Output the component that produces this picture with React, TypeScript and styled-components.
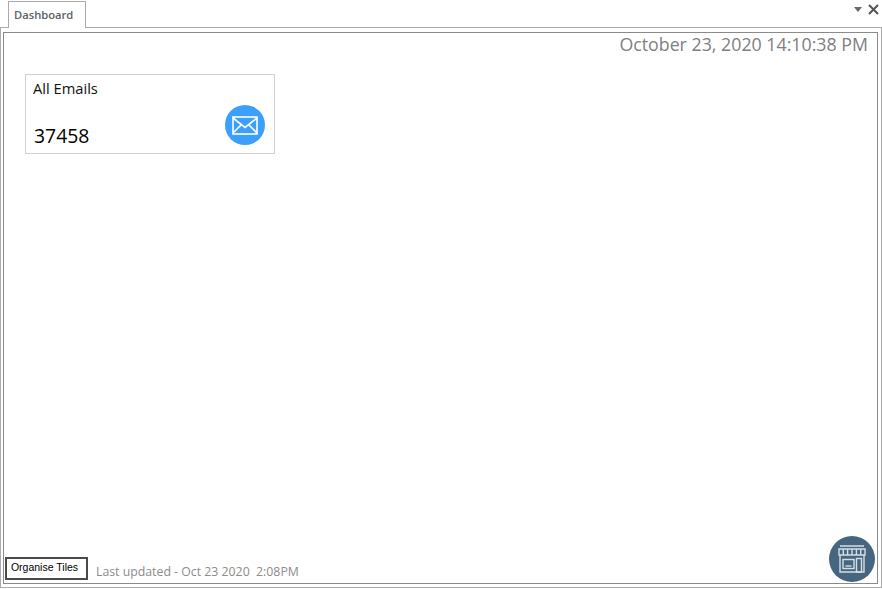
import React from "react";
import styled, { createGlobalStyle } from "styled-components";

const Global = createGlobalStyle`
  html, body {
    margin: 0;
    padding: 0;
    background: #fff;
  }
  body {
    font-family: "Open Sans", "Noto Sans", sans-serif;
  }
`;

const Window = styled.div`
  width: 882px;
  height: 589px;
  display: flex;
  flex-direction: column;
  overflow: hidden;
  background: #fff;
`;

const TabStrip = styled.div`
  height: 27px;
  flex-shrink: 0;
  display: flex;
  align-items: flex-end;
  justify-content: space-between;
  padding: 0 3px 0 8px;
`;

const Tab = styled.div`
  width: 78px;
  height: 27px;
  margin-bottom: -1px;
  position: relative;
  z-index: 1;
  display: flex;
  align-items: center;
  box-sizing: border-box;
  border: 1px solid #ababab;
  border-bottom: none;
  background: #fff;
  padding: 0 0 2px 5px;
  color: #5a5f66;
  font-family: "Open Sans", sans-serif;
  font-size: 11.2px;
  font-weight: 600;
`;

const TabControls = styled.div`
  align-self: flex-start;
  display: flex;
  align-items: center;
  gap: 6px;
  padding-top: 4px;
`;

const Frame = styled.div`
  flex: 1;
  box-sizing: border-box;
  border: 1px solid #ababab;
  margin-bottom: 1px;
  padding: 4px 3px 3px 2px;
  display: flex;
`;

const Content = styled.div`
  flex: 1;
  box-sizing: border-box;
  border: 1px solid #8a8a8a;
  display: flex;
  flex-direction: column;
  padding: 0 2px 1px 1px;
`;

const Clock = styled.div`
  text-align: right;
  padding-right: 7px;
  margin-bottom: 2px;
  color: #808080;
  font-family: "Open Sans", sans-serif;
  font-size: 17.8px;
  line-height: 22px;
`;

const Tile = styled.div`
  width: 250px;
  height: 80px;
  margin: 17px 0 0 20px;
  box-sizing: border-box;
  border: 1px solid #d2d2d2;
  padding: 4px 9px 0 7px;
  display: flex;
  flex-direction: column;
`;

const TileTitle = styled.div`
  color: #111;
  font-size: 14.7px;
  line-height: 19px;
`;

const TileRow = styled.div`
  display: flex;
  align-items: flex-end;
  justify-content: space-between;
  margin-top: 7px;
`;

const TileCount = styled.div`
  color: #000;
  font-size: 19.4px;
  line-height: 27px;
  padding-left: 1px;
  margin-bottom: -4px;
`;

const IconBadge = styled.div<{ $bg: string; $size: number }>`
  width: ${(p) => p.$size}px;
  height: ${(p) => p.$size}px;
  border-radius: 50%;
  background: ${(p) => p.$bg};
  display: flex;
  align-items: center;
  justify-content: center;
  flex-shrink: 0;
`;

const Footer = styled.div`
  margin-top: auto;
  display: flex;
  align-items: flex-end;
  justify-content: space-between;
`;

const FooterLeft = styled.div`
  display: flex;
  align-items: flex-end;
  gap: 8px;
`;

const OrganiseButton = styled.button`
  width: 83px;
  height: 23px;
  margin-bottom: 2px;
  box-sizing: border-box;
  border: 2px solid #4a4a4a;
  background: #fff;
  color: #000;
  padding: 0 4px 3px 0;
  font-family: "Liberation Sans", Arial, sans-serif;
  font-size: 10.5px;
`;

const Updated = styled.div`
  color: #8c8c8c;
  font-size: 12.3px;
  line-height: 16px;
  white-space: pre;
  padding-bottom: 2px;
`;

const MailIcon = () => (
  <svg width="26" height="19" viewBox="0 0 26 19" fill="none" stroke="#fff" strokeWidth="1.6">
    <rect x="1" y="1" width="24" height="17" />
    <path d="M1 2 L13 11.5 L25 2" />
    <path d="M1 17 L9.5 8.5 M25 17 L16.5 8.5" />
  </svg>
);

const StoreIcon = () => (
  <svg width="28" height="28" viewBox="0 0 28 28" fill="none" stroke="#d5dee6" strokeWidth="1.4">
    <path d="M2 1 H26 M1 4 H27 V10 H1 Z" />
    <path d="M5.3 4 V10 M9.6 4 V10 M14 4 V10 M18.4 4 V10 M22.7 4 V10" />
    <path d="M2 10 V27 H26 V10" />
    <rect x="5" y="14.5" width="11" height="9" />
    <path d="M7.5 21 H13.5" />
    <rect x="18.5" y="13.5" width="5" height="13.5" />
  </svg>
);

const App = () => {
  return (
    <Window>
      <Global />
      <TabStrip>
        <Tab>Dashboard</Tab>
        <TabControls>
          <svg width="8" height="5" viewBox="0 0 8 5">
            <path d="M0 0 H8 L4 5 Z" fill="#6a6a6a" />
          </svg>
          <svg width="11" height="11" viewBox="0 0 11 11">
            <path d="M1 1 L10 10 M10 1 L1 10" stroke="#555" strokeWidth="2" />
          </svg>
        </TabControls>
      </TabStrip>
      <Frame>
        <Content>
          <Clock>October 23, 2020 14:10:38 PM</Clock>
          <Tile>
            <TileTitle>All Emails</TileTitle>
            <TileRow>
              <TileCount>37458</TileCount>
              <IconBadge $bg="#3b9ffb" $size={40}>
                <MailIcon />
              </IconBadge>
            </TileRow>
          </Tile>
          <Footer>
            <FooterLeft>
              <OrganiseButton>Organise Tiles</OrganiseButton>
              <Updated>Last updated - Oct 23 2020  2:08PM</Updated>
            </FooterLeft>
            <IconBadge $bg="#46667f" $size={46}>
              <StoreIcon />
            </IconBadge>
          </Footer>
        </Content>
      </Frame>
    </Window>
  );
};

export default App;
